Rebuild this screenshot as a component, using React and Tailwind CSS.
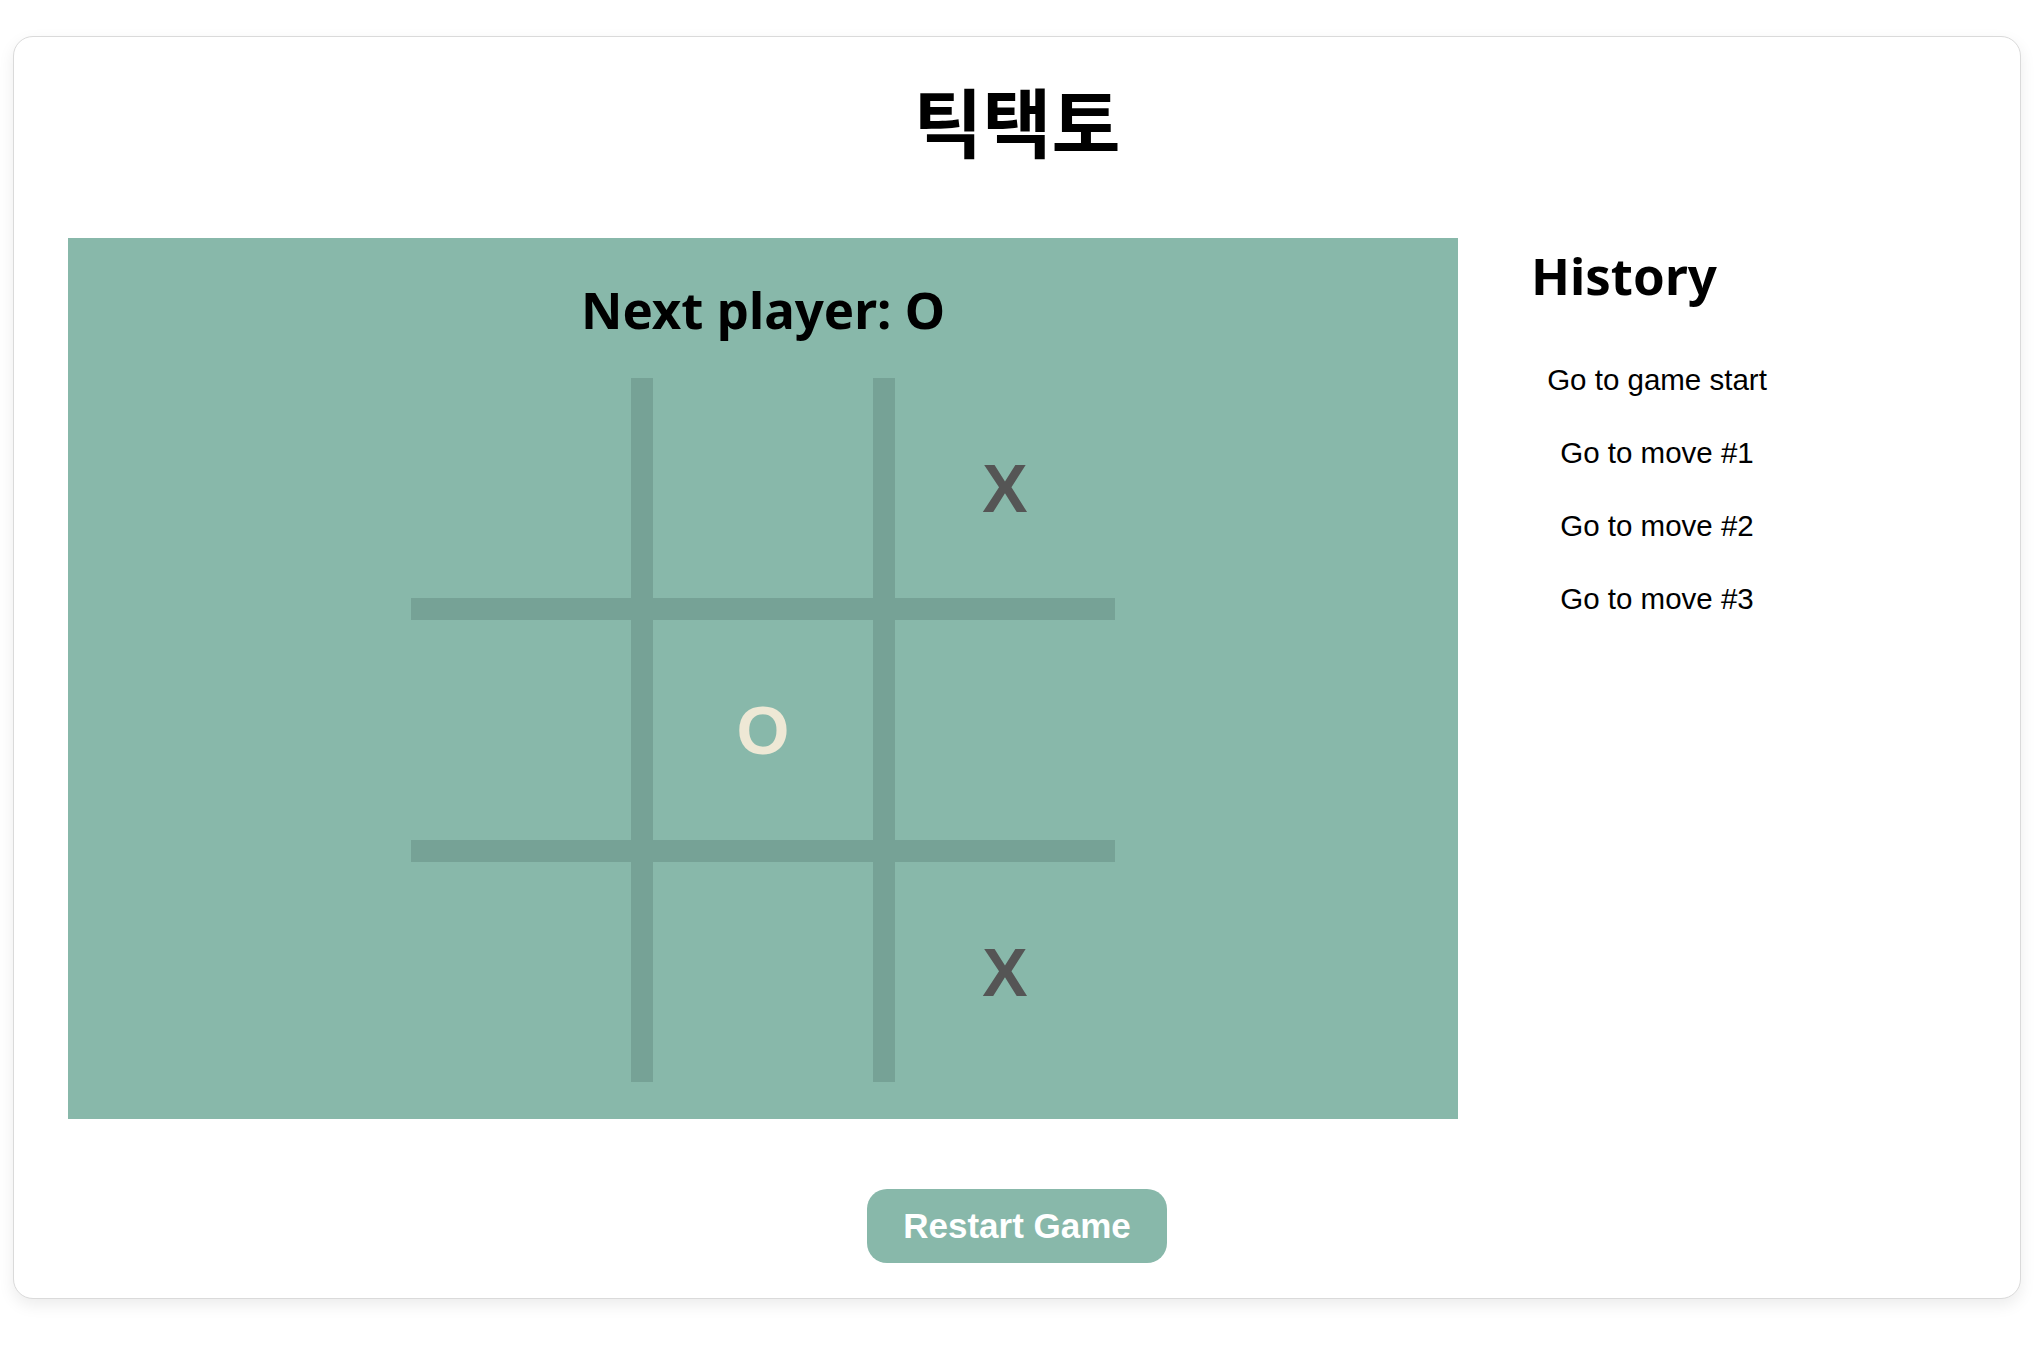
const board = [null, null, 'X', null, 'O', null, null, null, 'X']

const moves = ['Go to game start', 'Go to move #1', 'Go to move #2', 'Go to move #3']

function Cell({ value }) {
  return (
    <div className="bg-[#88b8aa] flex items-center justify-center">
      {value && (
        <span
          className={
            'font-["Liberation_Sans",Arial,sans-serif] text-[68px] font-bold leading-none ' +
            (value === 'X' ? 'text-[#555555]' : 'text-[#eee8d5]')
          }
        >
          {value}
        </span>
      )}
    </div>
  )
}

export default function App() {
  return (
    <div className="min-h-screen bg-white pt-[36px] pl-[13px] pr-[16px]">
      <div className="h-[1263px] rounded-[20px] border border-[#dadada] bg-white px-[54px] shadow-[0_6px_16px_rgba(0,0,0,0.08)]">
        {/* Title */}
        <h1 className='pt-[45px] text-center font-["Noto_Sans_CJK_KR",sans-serif] text-[75px] font-bold leading-none text-black'>
          틱택토
        </h1>

        <div className="mt-[81px] flex">
          {/* Game board */}
          <div className="flex h-[881px] w-[1390px] flex-col items-center bg-[#88b8aa]">
            <h2 className='mt-[46px] font-["Noto_Sans",sans-serif] text-[51px] font-bold leading-none text-black'>
              Next player: O
            </h2>
            <div className="mt-[43px] grid grid-cols-[repeat(3,220px)] grid-rows-[repeat(3,220px)] gap-[22px] bg-[#76a296]">
              {board.map((v, i) => (
                <Cell key={i} value={v} />
              ))}
            </div>
          </div>

          {/* History */}
          <div className="ml-[73px] w-[252px]">
            <h2 className='mt-[12px] font-["Noto_Sans",sans-serif] text-[51px] font-bold leading-none text-black'>
              History
            </h2>
            <ol className="mt-[64px] flex flex-col gap-[42px]">
              {moves.map((m) => (
                <li key={m} className="text-center">
                  <button className='font-["Liberation_Sans",Arial,sans-serif] text-[29.5px] leading-none text-black'>
                    {m}
                  </button>
                </li>
              ))}
            </ol>
          </div>
        </div>

        {/* Restart */}
        <div className="mt-[70px] flex justify-center">
          <button className='h-[74px] w-[300px] rounded-[20px] bg-[#88b8aa] font-["Liberation_Sans",Arial,sans-serif] text-[35px] font-bold text-white'>
            Restart Game
          </button>
        </div>
      </div>
    </div>
  )
}
